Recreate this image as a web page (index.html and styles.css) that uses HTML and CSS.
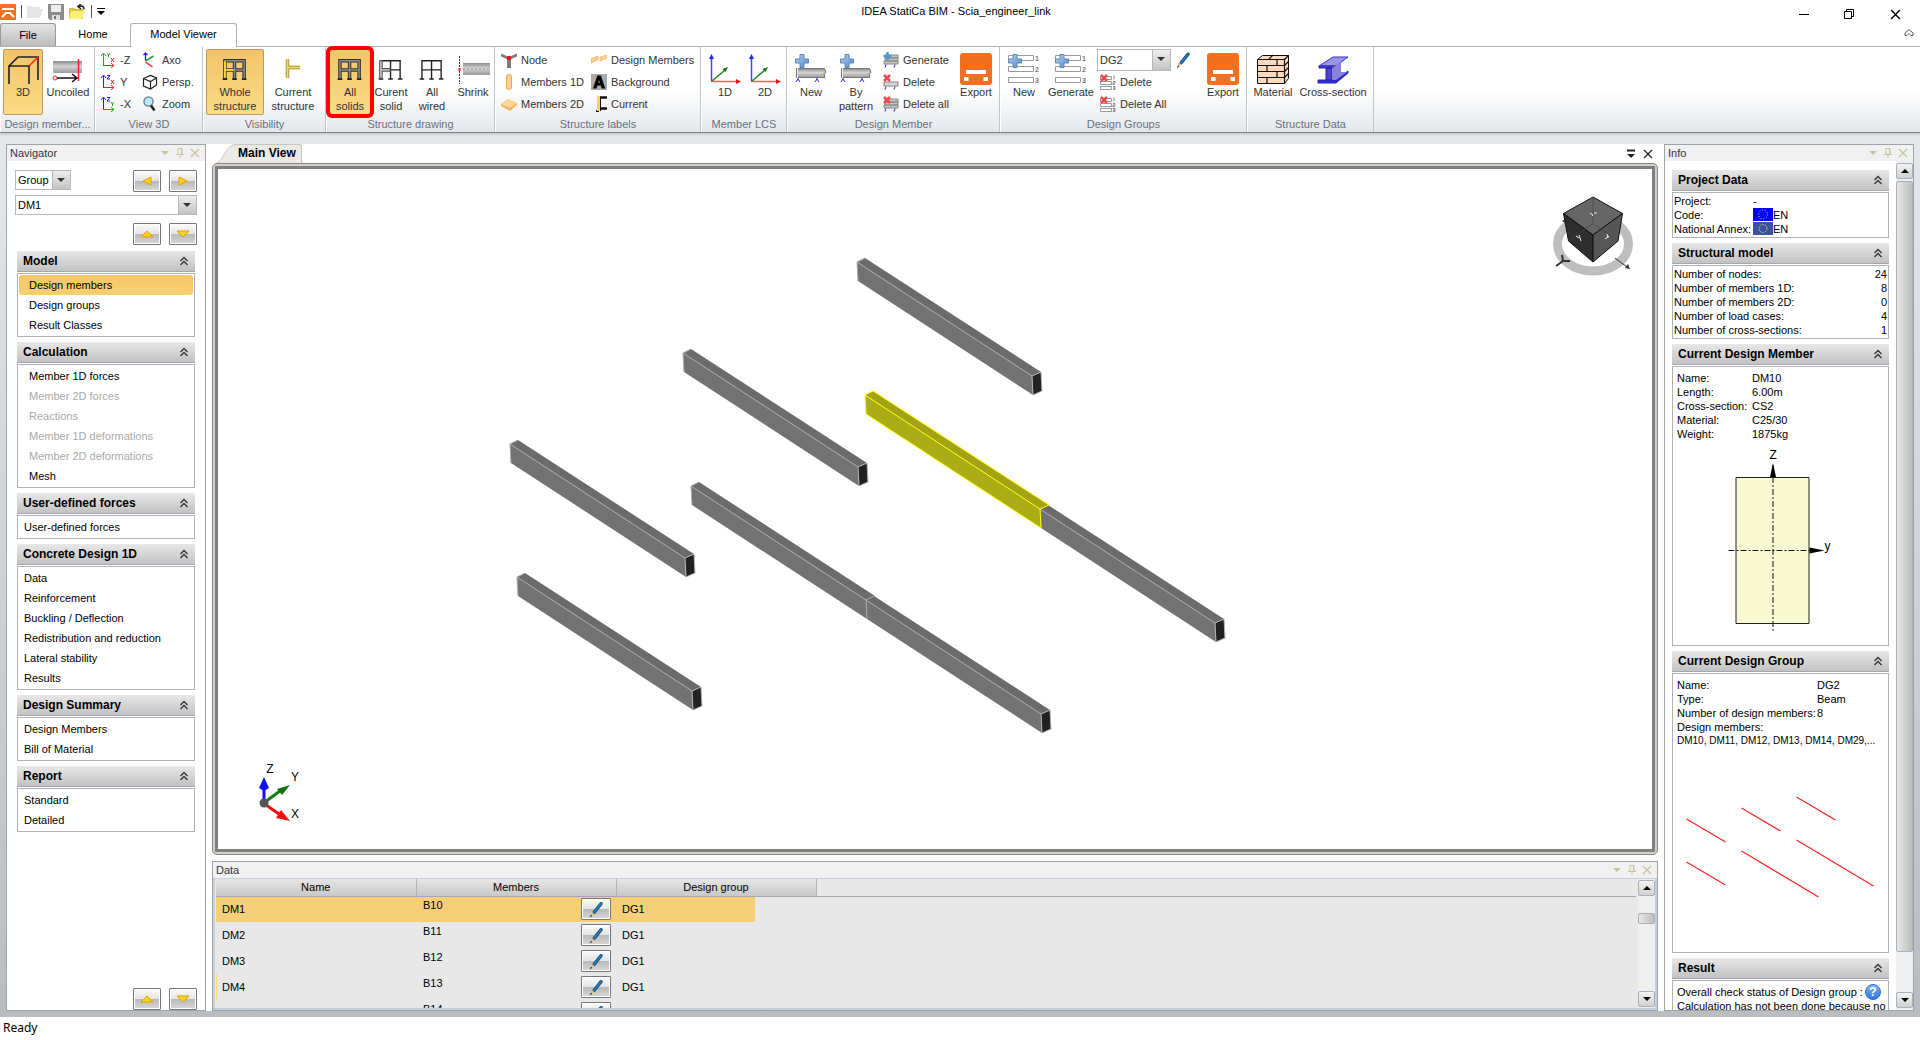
FILE: index.html
```html
<!DOCTYPE html>
<html lang="en">
<head>
<meta charset="utf-8">
<title>IDEA StatiCa BIM - Scia_engineer_link</title>
<link rel="stylesheet" href="styles.css">
</head>
<body>
<svg class="defs" aria-hidden="true">
  <defs>
    <linearGradient id="steel" x1="0" y1="0" x2="0" y2="1"><stop offset="0" stop-color="#8c8c8c"/><stop offset=".45" stop-color="#d4d4d4"/><stop offset="1" stop-color="#9a9a9a"/></linearGradient>
    <linearGradient id="plusfill" x1="0" y1="0" x2="1" y2="1"><stop offset="0" stop-color="#b8d4f0"/><stop offset="1" stop-color="#4f86c6"/></linearGradient>
    <linearGradient id="pool" x1="0" y1="0" x2="0" y2="1"><stop offset="0" stop-color="#8ab8f0"/><stop offset="1" stop-color="#2a70e0"/></linearGradient>
    <symbol id="i-chev" viewBox="0 0 10 10"><path d="M1.5 5 5 1.5 8.500 5M1.500 9 5 5.500 8.500 9" fill="none" stroke="#333" stroke-width="1.300"/></symbol>
    <symbol id="i-menu" viewBox="0 0 10 10"><path d="M1 3h8L5 7z" fill="#c8c4a0"/></symbol>
    <symbol id="i-pin" viewBox="0 0 10 10"><path d="M3 6V.5h4V6M1 6.500h8M5 7v3M6.500 1v5" fill="none" stroke="#c8c4a0"/></symbol>
    <symbol id="i-x" viewBox="0 0 10 10"><path d="M1 1l8 8M9 1l-8 8" fill="none" stroke="currentColor" stroke-width="1.300"/></symbol>
    <symbol id="i-plus" viewBox="0 0 14 14"><path d="M5 .5h4V5h4.500v4H9v4.500H5V9H.5V5H5z" fill="url(#plusfill)" stroke="#5a88b8"/></symbol>
    <symbol id="i-pen" viewBox="0 0 16 16"><path d="M13 2.200 6 11" stroke="#134a75" stroke-width="3.400" stroke-linecap="round"/><path d="M13 2.200 6 11" stroke="#2a80bc" stroke-width="1.600" stroke-linecap="round"/><path d="M3.800 10.500 6.800 13 2.500 15z" fill="#e3c58a"/><path d="M3 13.200 4.300 14.200 1.800 15.900z" fill="#222"/></symbol>
    <symbol id="i-export" viewBox="0 0 32 32"><rect width="32" height="32" rx="3" fill="#f37021"/><path d="M6 17h20v4H6zM4 24h4.500v4H4zM23.500 24H28v4h-4.500z" fill="#fff"/></symbol>
    <symbol id="i-beamnew" viewBox="0 0 32 32"><path d="M1.500 15.500h28l1.500 4-2 1 1 4H1.500z" fill="url(#steel)" stroke="#777"/><path d="M2.500 15v10" stroke="#eee"/><path d="M3 25v1l-2 3M3 26l2 3M22 25v1l-2 3M22 26l2 3" stroke="#22e" fill="none"/><use href="#i-plus" width="14" height="14" x="0" y="1"/></symbol>
    <symbol id="i-delbeam" viewBox="0 0 16 16"><rect x="1" y="8" width="14" height="4" fill="#d5d5d5" stroke="#888"/><path d="M3 12.500l-1 3M12 12.500l-1 3" stroke="#22e"/><path d="M1 1l6 6M7 1L1 7" stroke="#f04848" stroke-width="2.500"/></symbol>
    <symbol id="i-delbeams" viewBox="0 0 16 16"><path d="M2 3h13v3H2zM2 6h13v3H2zM1 9h14v3H1z" fill="#c5c5c5" stroke="#888"/><path d="M3 12.500l-1 3M12 12.500l-1 3" stroke="#22e"/><path d="M1 1l6 6M7 1L1 7" stroke="#f04848" stroke-width="2.500"/></symbol>
    <symbol id="i-genbeams" viewBox="0 0 16 16"><path d="M2 3h13v3H2zM2 6h13v3H2zM1 9h14v3H1z" fill="#c5c5c5" stroke="#888"/><path d="M3 12.500l-1 3M12 12.500l-1 3" stroke="#22e"/><path d="M4.500 0v8M.5 4h8" stroke="#5a92d0" stroke-width="2.500"/></symbol>
    <symbol id="i-grpnew" viewBox="0 0 32 32"><path d="M.5 2.500h25v5H.5zM.5 13.500h25v5H.5zM.5 24.500h25v5H.5z" fill="#fff" stroke="#999"/><use href="#i-plus" width="14" height="14" x="0" y="1"/><g font-family="Liberation Sans" font-size="7" font-weight="bold" fill="#777"><text x="27" y="8">1</text><text x="27" y="19">2</text><text x="27" y="30">3</text></g></symbol>
    <symbol id="i-grpdel" viewBox="0 0 16 16"><path d="M.5 2.500h11v3H.5zM.5 7.500h11v3H.5zM.5 12.500h11v3H.5z" fill="#fff" stroke="#999"/><path d="M14 1.500v4M13 7.500h2v1.500h-2v1.500h2M13 12.500h2v3h-2M13 14h2" fill="none" stroke="#888"/><path d="M1 1l6 6M7 1L1 7" stroke="#f04848" stroke-width="2.500"/></symbol>
    <symbol id="i-lcs" viewBox="0 0 32 32"><path d="M2.500 28V4" stroke="#44f" stroke-width="1.500"/><path d="M0 6l2.500-5L5 6z" fill="#22f"/><path d="M2 28.500h26" stroke="#f55" stroke-width="1.500"/><path d="M27 26l5 2.500-5 2.500z" fill="#e11"/><path d="M3 28l13-11" stroke="#282" stroke-width="1.500"/><path d="M19 14l-5.500 2 3 3z" fill="#171"/></symbol>
    <symbol id="i-frame" viewBox="0 0 28 24"><path d="M3.500 23V2.500h21V23M14 3v20M3.500 12.500h21M1 22.500h5M11.500 22.500h5M22 22.500h5" fill="none" stroke="#222" stroke-width="1.500"/></symbol>
    <symbol id="i-frame-solid" viewBox="0 0 28 24"><path d="M3.500 23V2.500h21V23M14 3v20M3.500 12.500h21" fill="none" stroke="#333" stroke-width="3.800"/><path d="M3.500 23V2.500h21V23M14 3v20M3.500 12.500h21" fill="none" stroke="#8d8d85" stroke-width="1.600"/><path d="M1 22.500h5M11.500 22.500h5M22 22.500h5" stroke="#222" stroke-width="2"/></symbol>
    <g id="beam"><path d="M0 0 8 -4 184 110 175 114z" fill="#6b6b6b"/><path d="M0 0 175 114 176 133 1 19z" fill="#727272"/><path d="M1 19 0 0 8 -4M0 0 175 114" fill="none" stroke="#aaa"/></g>
    <g id="cap"><path d="M175 114 184 110 185 129 176 133z" fill="#222" stroke="#b5b5b5"/></g>
  </defs>
</svg>

<header class="titlebar">
  <div class="quick">
    <svg width="16" height="16" viewBox="0 0 16 16"><rect width="16" height="16" rx="1" fill="#f37021"/><path d="M2 4h12v2H2z" fill="#fff"/><path d="M2 13l4-4h4l4 4" fill="none" stroke="#fff" stroke-width="2"/></svg>
    <i class="bar"></i>
    <svg width="16" height="16" viewBox="0 0 16 16"><path d="M0 2h5l1 1h7v2h3l-3 9H0z" fill="#e6e6e6"/></svg>
    <svg width="16" height="16" viewBox="0 0 16 16"><path d="M0 0h16v16H2l-2-2z" fill="#8c8c8c"/><path d="M3 1h10v7H3z" fill="#eee"/><path d="M4 11h8v5H4z" fill="#ddd"/><path d="M6 12h2v3H6z" fill="#777"/></svg>
    <svg width="17" height="16" viewBox="0 0 17 16"><path d="M0 4h5l1 1h8v10H0z" fill="#d8c23c"/><path d="M2 7h14l-3 8H0z" fill="#ffef7a"/><path d="M10 2.500q5-2 5 3M12 0l-3 2.500L12 5" fill="none" stroke="#222" stroke-width="1.500"/></svg>
    <i class="bar"></i>
    <svg width="8" height="8" viewBox="0 0 8 8"><path d="M0 .5h8" stroke="#000"/><path d="M0 3h8L4 7z"/></svg>
  </div>
  <h1>IDEA StatiCa BIM - Scia_engineer_link</h1>
  <div class="winbtns">
    <button aria-label="Minimize"><svg width="10" height="12"><path d="M0 6.500h10" stroke="#000"/></svg></button>
    <button aria-label="Restore"><svg width="11" height="11"><path d="M.5 2.500h7v7h-7zM2.500 2V.5h7v7H8" fill="none" stroke="#000"/></svg></button>
    <button aria-label="Close"><svg width="11" height="11"><use href="#i-x"/></svg></button>
  </div>
</header>

<nav class="tabs">
  <button class="tab file">File</button><button class="tab home">Home</button><button class="tab active">Model Viewer</button>
  <button class="collapse" aria-label="Collapse ribbon"><svg width="10" height="8"><path d="M1 4l4-3.500L9 4v2.500H7L5 4.500 3 6.500H1z" fill="none" stroke="#556"/></svg></button>
</nav>

<div class="ribbon">
  <section class="grp g1"><div class="tools">
    <button class="big w40 on"><svg width="32" height="32" viewBox="0 0 32 32"><path d="M2 31V13h20v18M2 13l9-9h20v23" fill="none" stroke="#222" stroke-width="1.600"/><path d="M22 13l9-9" stroke="#f22" stroke-width="1.600"/></svg>3D</button>
    <button class="big w50"><svg width="32" height="32" viewBox="0 0 32 32"><rect x="1" y="8" width="29" height="12" fill="url(#steel)"/><path d="M26.500 6v22" stroke="#f22" stroke-width="1.500"/><circle cx="3" cy="25" r="2" fill="none" stroke="#f22"/><path d="M5 25h19M20 21l5 4-5 4" fill="none" stroke="#111" stroke-width="1.500"/></svg>Uncoiled</button>
  </div><h2>Design member...</h2></section>

  <section class="grp g2"><div class="tools gap-l">
    <div class="col w42">
      <button class="small"><svg width="16" height="16"><path d="M3.500 13V2M1 4l2.500-3L6 4" fill="none" stroke="#2a2"/><path d="M3 13.500h10M11 11l3 2.500-3 2.500M11 6l3 4M14 6l-3 4" fill="none" stroke="#e22"/><path d="M7 1l1.500 2L10 1M8.500 3v2" fill="none" stroke="#2a2"/></svg>-Z</button>
      <button class="small"><svg width="16" height="16"><path d="M3.500 13V2M1 4l2.500-3L6 4M7 1.500h3L7 5h3" fill="none" stroke="#22e"/><path d="M3 13.500h10M11 11l3 2.500-3 2.500M11 6l3 4M14 6l-3 4" fill="none" stroke="#e22"/></svg>Y</button>
      <button class="small"><svg width="16" height="16"><path d="M3.500 13V2M1 4l2.500-3L6 4M7 1.500h3L7 5h3" fill="none" stroke="#22e"/><path d="M3 13.500h10M11 11l3 2.500-3 2.500M11 6l1.500 2L14 6M12.500 8v2" fill="none" stroke="#2a2"/></svg>-X</button>
    </div>
    <div class="col">
      <button class="small"><svg width="16" height="16"><path d="M3.500 9V1M1.500 3l2-2 2 2" fill="none" stroke="#22e" stroke-width="1.300"/><path d="M3.500 9l8-5" stroke="#2a2" stroke-width="1.500"/><path d="M3.500 10l7 5" stroke="#e22" stroke-width="1.500"/></svg>Axo</button>
      <button class="small"><svg width="16" height="16"><path d="M1.500 4.500l7-3 6 2.500v7l-6 4-7-3zM1.500 4.500l7 3 6-3.500M8.500 7.500V15" fill="none" stroke="#222" stroke-width="1.200"/></svg>Persp.</button>
      <button class="small"><svg width="16" height="16"><circle cx="6.500" cy="5.500" r="4.500" fill="#b5eef5" stroke="#789" stroke-width="1.500"/><path d="M9 9.500l3.500 5" stroke="#222" stroke-width="2.500"/></svg>Zoom</button>
    </div>
  </div><h2>View 3D</h2></section>

  <section class="grp g3"><div class="tools">
    <button class="big w58 on"><svg width="32" height="32" viewBox="-3 -6 35 35"><use href="#i-frame-solid" width="28" height="24"/><path d="M3.500 3v18M5 12.500h8" stroke="#fd2" stroke-width="2"/></svg>Whole<br>structure</button>
    <button class="big w58"><svg width="32" height="32"><path d="M10.500 6v19M12 14.500h11" stroke="#777" stroke-width="3.400"/><path d="M10.500 6v19M10.500 14.500H23" stroke="#fd2" stroke-width="2"/></svg>Current<br>structure</button>
  </div><h2>Visibility</h2></section>

  <section class="grp g4"><div class="tools">
    <button class="big w42 on marked"><svg width="32" height="32" viewBox="-3 -6 35 35"><use href="#i-frame-solid" width="28" height="24"/></svg>All<br>solids</button>
    <button class="big w40"><svg width="32" height="32" viewBox="-3 -6 35 35"><use href="#i-frame" width="28" height="24"/><path d="M3.500 2v20M4 12.500h10" stroke="#555" stroke-width="4"/><path d="M3.500 3v18M4 12.500h9" stroke="#bbb" stroke-width="2"/></svg>Curent<br>solid</button>
    <button class="big w42"><svg width="32" height="32" viewBox="-3 -6 35 35"><use href="#i-frame" width="28" height="24"/></svg>All<br>wired</button>
    <button class="big w40"><svg width="32" height="32"><path d="M2.500 3v28" stroke="#333" stroke-dasharray="2 1"/><path d="M2.500 15v3" stroke="#f22" stroke-width="2"/><rect x="6" y="10" width="27" height="12" fill="url(#steel)"/><path d="M6 16h26" stroke="#999" stroke-dasharray="2 2"/></svg>Shrink</button>
  </div><h2>Structure drawing</h2></section>

  <section class="grp g5"><div class="tools gap-m">
    <div class="col w90">
      <button class="small"><svg width="16" height="16"><path d="M0 1.500l7 3h2l7-3v3L10 7v9H6V7L0 4.500z" fill="#7b7b86"/><circle cx="8" cy="6" r="2.300" fill="#e11"/></svg>Node</button>
      <button class="small"><svg width="16" height="16"><rect x="5.500" y=".5" width="5" height="15" rx="2" fill="#ffd08a" stroke="#e8a850"/></svg>Members 1D</button>
      <button class="small"><svg width="16" height="16"><path d="M0 8l7-5 9 4v2l-7 6-9-5z" fill="#f3b45c"/><path d="M0 8l7-5 9 4-7 5z" fill="#ffd595"/></svg>Members 2D</button>
    </div>
    <div class="col">
      <button class="small"><svg width="16" height="16"><path d="M0 7l7-3v4l-7 3zM9 5l7-2v3L9 9z" fill="#ffd08a" stroke="#f0b060" stroke-width=".7"/></svg>Design Members</button>
      <button class="small"><svg width="16" height="16"><path d="M0 0h16v16H0z" fill="#aaa"/><text x="8" y="14" text-anchor="middle" font-family="Liberation Sans" font-weight="bold" font-size="16" stroke="#000">A</text></svg>Background</button>
      <button class="small"><svg width="16" height="16"><path d="M6 1.500h10M8 12.500h8M5 15.500h3" stroke="#111" stroke-width="2.500"/><path d="M7.500 0v15" stroke="#fd2" stroke-width="3"/><path d="M9.500 2v13" stroke="#111"/></svg>Current</button>
    </div>
  </div><h2>Structure labels</h2></section>

  <section class="grp g6"><div class="tools">
    <button class="big w40"><svg width="32" height="32"><use href="#i-lcs"/></svg>1D</button>
    <button class="big w40"><svg width="32" height="32"><use href="#i-lcs"/></svg>2D</button>
  </div><h2>Member LCS</h2></section>

  <section class="grp g7"><div class="tools">
    <button class="big w42"><svg width="32" height="32"><use href="#i-beamnew"/></svg>New</button>
    <button class="big w48"><svg width="32" height="32"><use href="#i-beamnew"/></svg>By<br>pattern</button>
    <div class="col w78">
      <button class="small"><svg width="16" height="16"><use href="#i-genbeams"/></svg>Generate</button>
      <button class="small"><svg width="16" height="16"><use href="#i-delbeam"/></svg>Delete</button>
      <button class="small"><svg width="16" height="16"><use href="#i-delbeams"/></svg>Delete all</button>
    </div>
    <button class="big w36"><svg width="32" height="32"><use href="#i-export"/></svg>Export</button>
  </div><h2>Design Member</h2></section>

  <section class="grp g8"><div class="tools">
    <button class="big w42"><svg width="32" height="32"><use href="#i-grpnew"/></svg>New</button>
    <button class="big w52"><svg width="32" height="32"><use href="#i-grpnew"/></svg>Generate</button>
    <div class="col w108">
      <div class="picker">
        <span class="combo tall"><select aria-label="Design group"><option>DG2</option></select></span>
        <button class="icon" aria-label="Edit"><svg width="16" height="18"><use href="#i-pen"/></svg></button>
      </div>
      <button class="small"><svg width="16" height="16"><use href="#i-grpdel"/></svg>Delete</button>
      <button class="small"><svg width="16" height="16"><use href="#i-grpdel"/></svg>Delete All</button>
    </div>
    <button class="big w36"><svg width="32" height="32"><use href="#i-export"/></svg>Export</button>
  </div><h2>Design Groups</h2></section>

  <section class="grp g9"><div class="tools">
    <button class="big w48"><svg width="32" height="32"><path d="M.5 6.500l5-4h26v23l-4 5H.5z" fill="#ffd9bd" stroke="#111"/><path d="M.5 6.500h27v24M.5 12.500h27M.5 18.500h27M.5 24.500h27M27.500 6.500l4-4M27.500 12.500l4-4M27.500 18.500l4-4M27.500 24.500l4-4M20 6v6M10 12v6M20 18v6M10 24v6M12 6l4-4" fill="none" stroke="#111" stroke-width="1.200"/></svg>Material</button>
    <button class="big w72"><svg width="32" height="32"><path d="M2 13l14-9h15l-12 9z" fill="#9a94e4" stroke="#3a34b8"/><path d="M2 13h17v2H2zM9 15h6v12H9z" fill="#4a44d0" stroke="#2822b0"/><path d="M15 15l9-6v12l-9 6z" fill="#8882dc"/><path d="M1 27h18l12-9v2l-12 10H1z" fill="#2f28d8" stroke="#2822b0"/><path d="M15 27l9-8h6l-11 8z" fill="#8882dc"/></svg>Cross-section</button>
  </div><h2>Structure Data</h2></section>
</div>

<main class="workspace">
 <div class="dock">
  <aside class="panel navigator">
    <header class="phead"><h2>Navigator</h2><span class="pbtns"><button aria-label="Menu"><svg width="10" height="10"><use href="#i-menu"/></svg></button><button aria-label="Pin"><svg width="10" height="10"><use href="#i-pin"/></svg></button><button aria-label="Close"><svg width="10" height="10"><use href="#i-x"/></svg></button></span></header>
    <div class="finder">
      <div class="frow"><span class="combo group"><select aria-label="Filter"><option>Group</option></select></span>
        <span class="pair"><button class="arrow" aria-label="Previous"><svg width="12" height="12"><path d="M10 2v8L2 6z"/></svg></button><button class="arrow" aria-label="Next"><svg width="12" height="12"><path d="M2 2v8l8-4z"/></svg></button></span></div>
      <span class="combo"><select aria-label="Member"><option>DM1</option></select></span>
      <div class="frow end second"><span class="pair"><button class="arrow" aria-label="Up"><svg width="14" height="10"><path d="M1 8h12L7 2z"/></svg></button><button class="arrow" aria-label="Down"><svg width="14" height="10"><path d="M1 2h12L7 8z"/></svg></button></span></div>
    </div>
    <div class="sections">
      <section><h3>Model<svg width="10" height="10"><use href="#i-chev"/></svg></h3><div class="box inset"><button class="item sel">Design members</button><button class="item">Design groups</button><button class="item">Result Classes</button></div></section>
      <section><h3>Calculation<svg width="10" height="10"><use href="#i-chev"/></svg></h3><div class="box inset"><button class="item">Member 1D forces</button><button class="item" disabled>Member 2D forces</button><button class="item" disabled>Reactions</button><button class="item" disabled>Member 1D deformations</button><button class="item" disabled>Member 2D deformations</button><button class="item">Mesh</button></div></section>
      <section><h3>User-defined forces<svg width="10" height="10"><use href="#i-chev"/></svg></h3><div class="box"><button class="item">User-defined forces</button></div></section>
      <section><h3>Concrete Design 1D<svg width="10" height="10"><use href="#i-chev"/></svg></h3><div class="box"><button class="item">Data</button><button class="item">Reinforcement</button><button class="item">Buckling / Deflection</button><button class="item">Redistribution and reduction</button><button class="item">Lateral stability</button><button class="item">Results</button></div></section>
      <section><h3>Design Summary<svg width="10" height="10"><use href="#i-chev"/></svg></h3><div class="box"><button class="item">Design Members</button><button class="item">Bill of Material</button></div></section>
      <section><h3>Report<svg width="10" height="10"><use href="#i-chev"/></svg></h3><div class="box"><button class="item">Standard</button><button class="item">Detailed</button></div></section>
    </div>
    <div class="frow end foot"><span class="pair"><button class="arrow" aria-label="Scroll up"><svg width="14" height="10"><path d="M1 8h12L7 2z"/></svg></button><button class="arrow" aria-label="Scroll down"><svg width="14" height="10"><path d="M1 2h12L7 8z"/></svg></button></span></div>
  </aside>

  <div class="center">
    <div class="doctabs">
      <div class="doctab"><svg width="20" height="20" viewBox="0 0 20 20"><path d="M0 20Q4 18 9 9T20 .5V20z" fill="#eceae5"/><path d="M0 19.500Q4 18 9 9T20 .5" fill="none" stroke="#c9c6be"/></svg><h2>Main View</h2></div>
      <span class="docbtns"><button aria-label="Windows"><svg width="10" height="10"><path d="M1 1.500h8" stroke="#222" stroke-width="2"/><path d="M1 5h8L5 9z" fill="#222"/></svg></button><button aria-label="Close view"><svg width="10" height="10"><use href="#i-x"/></svg></button></span>
    </div>
    <div class="view"><div class="canvas">
      <svg class="scene" viewBox="218 169 1434 680" preserveAspectRatio="xMidYMid meet">
        <use href="#beam" x="857" y="262"/><use href="#cap" x="857" y="262"/>
        <use href="#beam" x="683" y="353"/><use href="#cap" x="683" y="353"/>
        <use href="#beam" x="510" y="444"/><use href="#cap" x="510" y="444"/>
        <use href="#beam" x="517" y="577"/><use href="#cap" x="517" y="577"/>
        <use href="#beam" x="691" y="486"/><use href="#beam" x="866" y="600"/><use href="#cap" x="866" y="600"/>
        <use href="#beam" x="1040" y="509"/><use href="#cap" x="1040" y="509"/>
        <g transform="translate(865 395)"><path d="M0 0 8 -4 184 110 175 114z" fill="#a2a212"/><path d="M0 0 175 114 176 133 1 19z" fill="#acac14"/><path d="M0 0 8 -4 184 110 175 114 0 0 1 19 176 133 175 114" fill="none" stroke="#ff0"/></g>
        <ellipse cx="1593" cy="244" rx="35.500" ry="27" fill="none" stroke="#bebebe" stroke-width="9"/>
        <g stroke="#111" stroke-linejoin="round"><path d="M1593 197 1622.500 213.500 1593 235 1563.500 213.500z" fill="#666"/><path d="M1563.500 213.500 1593 235V262L1568.500 241z" fill="#2e2e2e"/><path d="M1622.500 213.500 1593 235V262L1618 241z" fill="#565656"/></g>
        <path d="M1568.500 241 1593 223.500 1618 241M1593 197V223" fill="none" stroke="#444" opacity=".6"/>
        <path d="M1590 213l3 2-1 1M1594 213l3 0M1576 236l3 2M1579 235l2 6M1605 239l4-3M1607 234l1 4" stroke="#eee" fill="none"/>
        <path d="M1556 266l7-5h7M1563 261l-1-6" stroke="#333" stroke-width="2" fill="none"/><path d="M1615 258l12 9" stroke="#333"/><path d="M1630 269l-5-1 3-4zM1562 221l3-2v4z" fill="#333"/>
        <g stroke-width="3"><path d="M264 802V788" stroke="#11e"/><path d="M265 802l15-11" stroke="#187a18"/><path d="M266 805l13 9" stroke="#e11"/></g>
        <path d="M264 777l5 11-5 3-5-3z" fill="#11e"/><path d="M290 785l-8 10-5-6z" fill="#107010"/><path d="M290 821l-14-3 5-8z" fill="#e11"/><circle cx="264" cy="803" r="4.500" fill="#555"/>
        <g font-family="Liberation Sans" font-size="12" text-anchor="middle"><text x="270" y="773">Z</text><text x="295" y="781">Y</text><text x="295" y="818">X</text></g>
      </svg>
    </div></div>
    <section class="panel data">
      <header class="phead"><h2>Data</h2><span class="pbtns"><button aria-label="Menu"><svg width="10" height="10"><use href="#i-menu"/></svg></button><button aria-label="Pin"><svg width="10" height="10"><use href="#i-pin"/></svg></button><button aria-label="Close"><svg width="10" height="10"><use href="#i-x"/></svg></button></span></header>
      <div class="dbody">
        <div class="tablewrap"><table>
          <colgroup><col class="c"><col class="c"><col class="c"><col></colgroup>
          <thead><tr><th>Name</th><th>Members</th><th>Design group</th><th class="rest"></th></tr></thead>
          <tbody>
            <tr class="cur"><td>DM1</td><td><div class="mem">B10<button class="edit" aria-label="Edit B10"><svg width="16" height="17"><use href="#i-pen"/></svg></button></div></td><td>DG1</td><td></td></tr>
            <tr><td>DM2</td><td><div class="mem">B11<button class="edit" aria-label="Edit B11"><svg width="16" height="17"><use href="#i-pen"/></svg></button></div></td><td>DG1</td><td></td></tr>
            <tr><td>DM3</td><td><div class="mem">B12<button class="edit" aria-label="Edit B12"><svg width="16" height="17"><use href="#i-pen"/></svg></button></div></td><td>DG1</td><td></td></tr>
            <tr class="edge"><td>DM4</td><td><div class="mem">B13<button class="edit" aria-label="Edit B13"><svg width="16" height="17"><use href="#i-pen"/></svg></button></div></td><td>DG1</td><td></td></tr>
            <tr><td></td><td><div class="mem">B14<button class="edit" aria-label="Edit B14"><svg width="16" height="17"><use href="#i-pen"/></svg></button></div></td><td></td><td></td></tr>
          </tbody>
        </table></div>
        <div class="scroll"><button aria-label="Scroll up"><svg width="8" height="4"><path d="M0 4h8L4 0z"/></svg></button><i class="thumb short"></i><button class="down" aria-label="Scroll down"><svg width="8" height="4"><path d="M0 0h8L4 4z"/></svg></button></div>
      </div>
    </section>
  </div>

  <aside class="panel info">
    <header class="phead"><h2>Info</h2><span class="pbtns"><button aria-label="Menu"><svg width="10" height="10"><use href="#i-menu"/></svg></button><button aria-label="Pin"><svg width="10" height="10"><use href="#i-pin"/></svg></button><button aria-label="Close"><svg width="10" height="10"><use href="#i-x"/></svg></button></span></header>
    <div class="ibody">
      <div class="sections">
        <section><h3>Project Data<svg width="10" height="10"><use href="#i-chev"/></svg></h3><div class="box"><dl class="kv k79"><dt>Project:</dt><dd>-</dd><dt>Code:</dt><dd><svg class="flag" width="20" height="13"><path d="M0 0h20v13H0z" fill="#00f"/><circle cx="10" cy="6.500" r="4.500" fill="none" stroke="#ee4" stroke-dasharray="1 1.800"/></svg>EN</dd><dt>National Annex:</dt><dd><svg class="flag" width="20" height="13"><path d="M0 0h20v13H0z" fill="#3c50a0"/><circle cx="10" cy="6.500" r="4" fill="none" stroke="#cc9" stroke-dasharray="1.500 1"/></svg>EN</dd></dl></div></section>
        <section><h3>Structural model<svg width="10" height="10"><use href="#i-chev"/></svg></h3><div class="box"><dl class="kv right"><dt>Number of nodes:</dt><dd>24</dd><dt>Number of members 1D:</dt><dd>8</dd><dt>Number of members 2D:</dt><dd>0</dd><dt>Number of load cases:</dt><dd>4</dd><dt>Number of cross-sections:</dt><dd>1</dd></dl></div></section>
        <section><h3>Current Design Member<svg width="10" height="10"><use href="#i-chev"/></svg></h3><div class="box roomy"><dl class="kv k75"><dt>Name:</dt><dd>DM10</dd><dt>Length:</dt><dd>6.00m</dd><dt>Cross-section:</dt><dd>CS2</dd><dt>Material:</dt><dd>C25/30</dd><dt>Weight:</dt><dd>1875kg</dd></dl>
          <svg class="fig" viewBox="1678 441 206 200" height="200"><path d="M1736.500 477.500h73v146h-73z" fill="#f9f9d4" stroke="#222"/><path d="M1773.500 465v166M1729 550.500h90" stroke="#111" stroke-dasharray="6 2 2 2"/><path d="M1773.500 463l3 14h-6zM1825 550.500l-15-3v6z"/><g font-family="Liberation Sans" font-size="12"><text x="1770" y="459">Z</text><text x="1825" y="550">y</text></g></svg></div></section>
        <section><h3>Current Design Group<svg width="10" height="10"><use href="#i-chev"/></svg></h3><div class="box roomy"><dl class="kv k140"><dt>Name:</dt><dd>DG2</dd><dt>Type:</dt><dd>Beam</dd><dt>Number of design members:</dt><dd>8</dd></dl><p>Design members:</p><p class="line list">DM10, DM11, DM12, DM13, DM14, DM29,...</p>
          <svg class="fig" viewBox="1678 749 206 200" height="200"><path d="M1687 820l39 23M1742 809l39 23M1797 798l39 23M1687 863l39 23M1742 852l77 46M1797 841l77 46" stroke="#f22" fill="none" stroke-width="1.200"/></svg></div></section>
        <section><h3>Result<svg width="10" height="10"><use href="#i-chev"/></svg></h3><div class="box result"><p>Overall check status of Design group :<svg width="16" height="16"><circle cx="8" cy="8" r="7.500" fill="url(#pool)" stroke="#2a6fd8"/><text x="8" y="12" text-anchor="middle" font-family="Liberation Sans" font-weight="bold" font-size="12" fill="#fff">?</text></svg></p><p class="line">Calculation has not been done because no</p></div></section>
      </div>
      <div class="scroll"><button aria-label="Scroll up"><svg width="8" height="4"><path d="M0 4h8L4 0z"/></svg></button><i class="thumb long"></i><button class="down" aria-label="Scroll down"><svg width="8" height="4"><path d="M0 0h8L4 4z"/></svg></button></div>
    </div>
  </aside>
 </div>
</main>
<footer class="status">Ready</footer>
</body>
</html>
```
FILE: styles.css
```css
* { box-sizing: border-box; }
body { margin: 0; height: 100vh; display: flex; flex-direction: column; overflow: hidden; background: #fff; color: #000; font: 11px/14px "Liberation Sans", Arial, sans-serif; }
h1, h2, h3, p, dl, dd { margin: 0; font: inherit; }
button, select { font: inherit; color: inherit; padding: 0; border: 0; background: none; }
svg { display: block; flex: none; }
.defs { position: absolute; width: 0; height: 0; }

.titlebar { height: 23px; flex: none; display: grid; grid-template-columns: 1fr auto 1fr; padding-right: 8px; }
.titlebar h1 { line-height: 22px; font-size: 11px; }
.quick { display: flex; align-items: center; gap: 5px; }
.quick .bar { width: 1px; height: 13px; background: #555; }
.winbtns { display: flex; justify-content: flex-end; align-items: flex-end; gap: 35px; padding: 0 11px 3px 0; }

.tabs { height: 24px; flex: none; display: flex; border-bottom: 1px solid #b0b0b8; }
.tab { height: 23px; font-size: 11px; }
.file { width: 56px; border: 1px solid #999; border-bottom: 0; border-radius: 3px 3px 0 0; background: linear-gradient(#e4e4e4, #bdbdbd); }
.home { width: 74px; padding-bottom: 2px; }
.tab.active { width: 107px; height: 24px; padding-bottom: 3px; border: 1px solid #b0b0b8; border-bottom: 0; border-radius: 3px 3px 0 0; background: #fff; }
.collapse { margin-left: auto; padding: 0 6px 4px 0; }

.ribbon { height: 86px; flex: none; display: flex; background: linear-gradient(#fff 50%, #e4e8eb); border-bottom: 1px solid #7c8288; }
.grp { flex: none; display: flex; flex-direction: column; border-right: 1px solid #bfc5cc; border-left: 1px solid #fff; }
.g1 { width: 95px; } .g2 { width: 108px; } .g3 { width: 123px; } .g4 { width: 169px; } .g5 { width: 206px; }
.g6 { width: 86px; } .g7 { width: 213px; } .g8 { width: 247px; } .g9 { width: 127px; }
.grp h2 { text-align: center; color: #687080; line-height: 16px; white-space: nowrap; }
.tools { flex: 1; display: flex; padding: 2px 2px 0; color: #333; }
.gap-l { padding-left: 4px; } .gap-m { padding-left: 5px; }
.big { height: 66px; display: flex; flex-direction: column; align-items: center; flex: none; padding-top: 3px; line-height: 14px; border: 1px solid transparent; white-space: nowrap; text-align: center; }
.big svg { overflow: visible; }
.on { background: linear-gradient(#f3c468, #fadb86); border-color: #c0965a; border-radius: 2px; }
.marked { position: relative; }
.marked::after { content: ""; position: absolute; inset: -4px; border: 4px solid #f00; border-radius: 6px; pointer-events: none; }
.w36 { width: 36px; } .w40 { width: 40px; } .w42 { width: 42px; } .w48 { width: 48px; } .w50 { width: 50px; } .w52 { width: 52px; } .w58 { width: 58px; } .w72 { width: 72px; } .w78 { width: 78px; } .w90 { width: 90px; } .w108 { width: 108px; }
.g6 .tools { padding-left: 3px; } .g9 .tools { padding-left: 1px; }
.col { display: flex; flex-direction: column; flex: none; }
.small { height: 22px; display: flex; align-items: center; gap: 4px; white-space: nowrap; }
.picker { display: flex; gap: 4px; height: 22px; }
.g7 .col .small, .g8 .col .small { padding-left: 3px; }
.icon { width: 16px; }

.combo { position: relative; display: block; height: 20px; border: 1px solid #b4b8bc; background: #fff; }
.combo select { appearance: none; display: block; width: 100%; height: 18px; padding-left: 2px; outline: 0; }
.combo::before { content: ""; position: absolute; right: 0; top: 0; bottom: 0; width: 17px; background: linear-gradient(#eee, #c4c4c4); border-left: 1px solid #b4b8bc; pointer-events: none; }
.combo::after { content: ""; position: absolute; right: 5px; top: 7px; border: 4px solid transparent; border-top-color: #333; border-bottom: 0; pointer-events: none; }
.combo.tall { width: 74px; height: 22px; } .combo.tall select { height: 20px; }
.combo.group { width: 56px; }

.workspace { flex: 1; min-height: 0; padding: 11px 6px 6px; background: linear-gradient(#cdd0d4, #e4e8eb 4px, #e0e3e8 10%, #b9bdc2); display: flex; }
.dock { flex: 1; min-width: 0; display: flex; gap: 6px; background: #fff; }
.panel { border: 1px solid #a0a4a8; background: #fff; display: flex; flex-direction: column; min-height: 0; }
.phead { height: 16px; flex: none; display: flex; justify-content: space-between; align-items: center; padding: 0 5px 0 3px; background: #f1f1f1; color: #334; }
.pbtns, .docbtns { display: flex; gap: 5px; color: #c8c4a0; }
.navigator { width: 200px; flex: none; }
.finder { padding: 9px 8px 0; }
.frow { display: flex; justify-content: space-between; }
.frow .pair { display: flex; gap: 8px; }
.frow + .combo { margin-top: 3px; }
.end { justify-content: flex-end; }
.second { margin-top: 8px; }
.foot { margin-top: auto; padding-right: 8px; }
.arrow, .edit { width: 28px; height: 22px; display: flex; align-items: center; justify-content: center; border: 1px solid #777; border-radius: 1px; background: linear-gradient(#fbfbfb, #e4e4e4 50%, #b8b8b8 50%, #d8d8d8); box-shadow: inset 0 0 0 1px #fff; }
.arrow path { fill: #ffd21a; stroke: #e0a000; }
.navigator .sections { padding: 6px 10px 0; }
.sections section { margin-bottom: 5px; }
.sections h3 { display: flex; justify-content: space-between; align-items: center; height: 21px; margin-bottom: 1px; padding: 0 6px; font-size: 12px; font-weight: bold; background: linear-gradient(#e8e8e8, #c2c2c2); border-bottom: 1px solid #a4a8b0; }
.box { border: 1px solid #b0b2b8; padding: 1px; background: #fff; }
.item { display: block; width: 100%; height: 20px; padding-left: 5px; text-align: left; border-radius: 3px; }
.inset .item { padding-left: 10px; }
.item:disabled { color: #aaa; }
.sel { background: linear-gradient(#f5c566, #f8d070); }

.center { flex: 1; min-width: 0; display: flex; flex-direction: column; }
.doctabs { height: 19px; flex: none; display: flex; justify-content: space-between; }
.doctab { display: flex; padding-left: 4px; }
.doctab h2 { height: 19px; padding: 0 5px 0 2px; font-size: 12px; line-height: 17px; font-weight: bold; background: #eceae5; border-top: 1px solid #c9c6be; border-right: 1px solid #c9c6be; border-radius: 0 3px 0 0; }
.docbtns { align-items: center; gap: 7px; padding-right: 5px; color: #222; }
.view { flex: 1; min-height: 0; border: 1px solid #888; border-radius: 5px; background: #d4d0c8; padding: 2px; display: flex; }
.canvas { flex: 1; min-width: 0; border: 3px solid #808080; background: #fff; }
.scene { width: 100%; height: 100%; }
.data { height: 150px; flex: none; margin-top: 6px; }
.dbody { flex: 1; min-height: 0; display: flex; gap: 2px; border: 2px solid #c5d0dc; border-top-width: 1px; background: #e8e8e8; padding-left: 1px; }
.tablewrap { flex: 1; overflow: hidden; }
table { width: 100%; table-layout: fixed; border-collapse: collapse; }
.c { width: 200px; }
th { height: 17px; padding: 0; font-weight: normal; background: linear-gradient(#e6e6e6, #c8c8c8); border-right: 1px solid #b0b4ba; border-bottom: 1px solid #a4a8b0; }
th.rest { background: #e8e8e8; border-right: 0; }
td { height: 26px; padding: 0 6px; }
.mem { height: 22px; display: flex; justify-content: space-between; line-height: 14px; padding-left: 1px; }
.edit { width: 30px; margin-right: -1px; }
.cur td { background: #f5cf78; }
.cur td:nth-child(3) { background: linear-gradient(#f5cf78, #f5cf78) no-repeat; background-size: 139px 100%; }
.cur td:last-child { background: none; }
.edge td:first-child { box-shadow: inset 1px 0 #ffd870; }
.scroll { width: 17px; flex: none; display: flex; flex-direction: column; background: #efefef; padding: 1px 0; }
.scroll button { height: 16px; flex: none; display: flex; align-items: center; justify-content: center; border: 1px solid #a8b0bc; border-radius: 2px; background: linear-gradient(#f4f4f4, #d0d0d0); }
.scroll .down { margin-top: auto; }
.thumb { border: 1px solid #a8b0bc; border-radius: 2px; background: linear-gradient(90deg, #e8e8e8, #bcbcbc); }
.short { height: 11px; margin-top: 17px; }
.long { margin: 2px 0 40px; flex: 1; }
.info { width: 250px; flex: none; }
.ibody { flex: 1; min-height: 0; display: flex; padding-left: 7px; gap: 7px; }
.info .sections { flex: 1; min-width: 0; padding-top: 9px; overflow: hidden; }
.info .scroll { padding: 2px 0; }
.kv { display: grid; }
.kv dd { display: flex; }
.k79 { grid-template-columns: 79px 1fr; } .k75 { grid-template-columns: 75px 1fr; } .k140 { grid-template-columns: 140px 1fr; } .right { grid-template-columns: 1fr auto; }
.right dd { justify-content: flex-end; }
.roomy { padding: 4px 0 0 4px; height: 280px; }
.fig { width: 100%; padding-right: 4px; }
.line { white-space: nowrap; }
.list { font-size: 10px; }
.result { padding: 3px 0 3px 4px; }
.result p:first-child { display: flex; align-items: center; gap: 2px; height: 15px; white-space: nowrap; }

.status { height: 23px; flex: none; padding-left: 3px; line-height: 22px; font-family: "Noto Sans", sans-serif; font-size: 12px; }
```
